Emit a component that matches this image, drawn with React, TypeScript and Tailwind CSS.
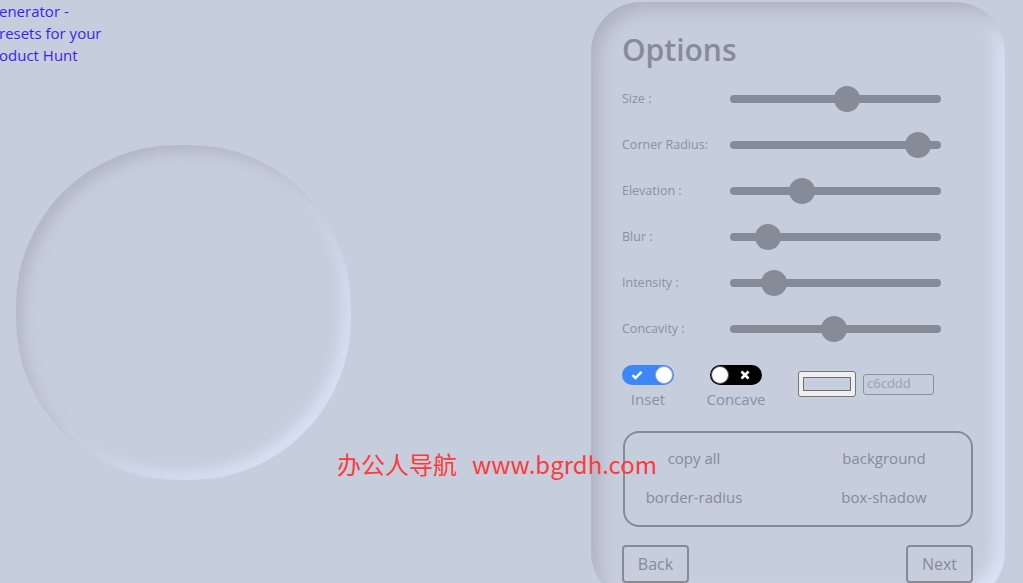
import React from "react";

const sliders = [
  { label: "Size :", value: 0.56 },
  { label: "Corner Radius:", value: 0.946 },
  { label: "Elevation :", value: 0.32 },
  { label: "Blur :", value: 0.135 },
  { label: "Intensity :", value: 0.168 },
  { label: "Concavity :", value: 0.492 },
];

function Slider({ value }: { value: number }) {
  // thumb travel is track width minus thumb size
  const left = value * (211 - 26);
  return (
    <div className="relative h-[26px] w-[211px] flex items-center">
      <div className="h-[8px] w-full rounded-full bg-[#868b98]" />
      <div
        className="absolute top-0 h-[26px] w-[26px] rounded-full bg-[#868b98]"
        style={{ left }}
      />
    </div>
  );
}

function Toggle({ on, dark }: { on: boolean; dark?: boolean }) {
  return (
    <div
      className={
        dark
          ? "relative h-[20px] w-[52px] rounded-full bg-black"
          : "relative h-[20px] w-[52px] rounded-full bg-[#3d88f6]"
      }
    >
      {on ? (
        <>
          <svg className="absolute left-[9px] top-[5px]" width="12" height="10" viewBox="0 0 12 10">
            <path d="M1.5 5.2 L4.5 8 L10.5 1.8" fill="none" stroke="white" strokeWidth="2.4" />
          </svg>
          <div className="absolute right-[1px] top-[1px] h-[18px] w-[18px] rounded-full bg-white border border-[#9aa3b5]" />
        </>
      ) : (
        <>
          <div className="absolute left-[1px] top-[1px] h-[18px] w-[18px] rounded-full bg-white border border-[#555]" />
          <svg className="absolute right-[12px] top-[5px]" width="10" height="10" viewBox="0 0 10 10">
            <path d="M1.5 1.5 L8.5 8.5 M8.5 1.5 L1.5 8.5" fill="none" stroke="white" strokeWidth="2.6" />
          </svg>
        </>
      )}
    </div>
  );
}

export default function App() {
  return (
    <div className="relative h-[583px] w-[1023px] overflow-hidden bg-[#c6cddd] font-['Open_Sans',sans-serif]">
      <div className="flex">
        {/* preview side */}
        <div className="w-[591px] shrink-0">
          <div className="ml-[-1px] text-[15px] leading-[22px] text-[#3a1ff2]">
            <p>enerator -</p>
            <p>resets for your</p>
            <p>oduct Hunt</p>
          </div>
          <div className="ml-[16px] mt-[79px] h-[335px] w-[335px] rounded-[48%] bg-[#c6cddd] shadow-[inset_7px_7px_14px_#b1b7c6,inset_-7px_-7px_14px_#dbe2f5]" />
        </div>

        {/* options panel */}
        <div className="mt-[2px] h-[600px] w-[414px] shrink-0 rounded-[50px] bg-[#c6cddd] pl-[31px] pr-[32px] pt-[28px] shadow-[inset_8px_8px_16px_#adb3c1,inset_-8px_-8px_16px_#dfe6f9]">
          <h2 className="text-[30px] leading-[40px] font-semibold text-[#868b98]">Options</h2>

          <div className="mt-[6px]">
            {sliders.map((s) => (
              <div key={s.label} className="flex h-[46px] items-center">
                <span className="w-[108px] text-[12.5px] text-[#8a91a3]">{s.label}</span>
                <Slider value={s.value} />
              </div>
            ))}
          </div>

          <div className="mt-[13px] flex items-start gap-8">
            <div className="flex w-[52px] flex-col items-center">
              <Toggle on />
              <span className="mt-[3px] text-[15px] leading-[22px] text-[#8a91a3]">Inset</span>
            </div>
            <div className="flex w-[60px] flex-col items-center">
              <Toggle on={false} dark />
              <span className="mt-[3px] text-[15px] leading-[22px] text-[#8a91a3]">Concave</span>
            </div>
            <div className="mt-[6px] flex items-center gap-[7px]">
              <div className="flex h-[26px] w-[58px] items-center justify-center rounded-[3px] border border-[#767676] bg-[#efefef]">
                <div className="h-[14px] w-[48px] border border-[#6e6e6e] bg-[#c6cddd]" />
              </div>
              <div className="flex h-[21px] w-[71px] items-center rounded-[3px] border border-[#8b91a0] pl-[3px] text-[13px] text-[#9aa0ad]">
                c6cddd
              </div>
            </div>
          </div>

          <div className="ml-[1px] mt-[21px] flex h-[96px] w-[350px] justify-between rounded-[16px] border-2 border-[#868b98] py-[14px] pl-[20px] pr-[43px] text-[15px] leading-[22px] text-[#868b98]">
            <div className="flex w-[98px] flex-col items-center gap-[17px]">
              <span>copy all</span>
              <span className="whitespace-nowrap">border-radius</span>
            </div>
            <div className="flex w-[88px] flex-col items-center gap-[17px]">
              <span>background</span>
              <span className="whitespace-nowrap">box-shadow</span>
            </div>
          </div>

          <div className="mt-[18px] flex w-[351px] justify-between">
            <button className="h-[38px] w-[67px] rounded-[4px] border-2 border-[#868b98] text-[16px] text-[#868b98]">
              Back
            </button>
            <button className="h-[38px] w-[67px] rounded-[4px] border-2 border-[#868b98] text-[16px] text-[#868b98]">
              Next
            </button>
          </div>
        </div>
      </div>

      {/* site mark laid over the page */}
      <div className="absolute left-[337px] top-[449px] whitespace-nowrap font-['Noto_Sans_CJK_SC',sans-serif] text-[24px] leading-[30px] text-[#ff3a3a]">
        办公人导航<span className="ml-[15px]">www.bgrdh.com</span>
      </div>
    </div>
  );
}
